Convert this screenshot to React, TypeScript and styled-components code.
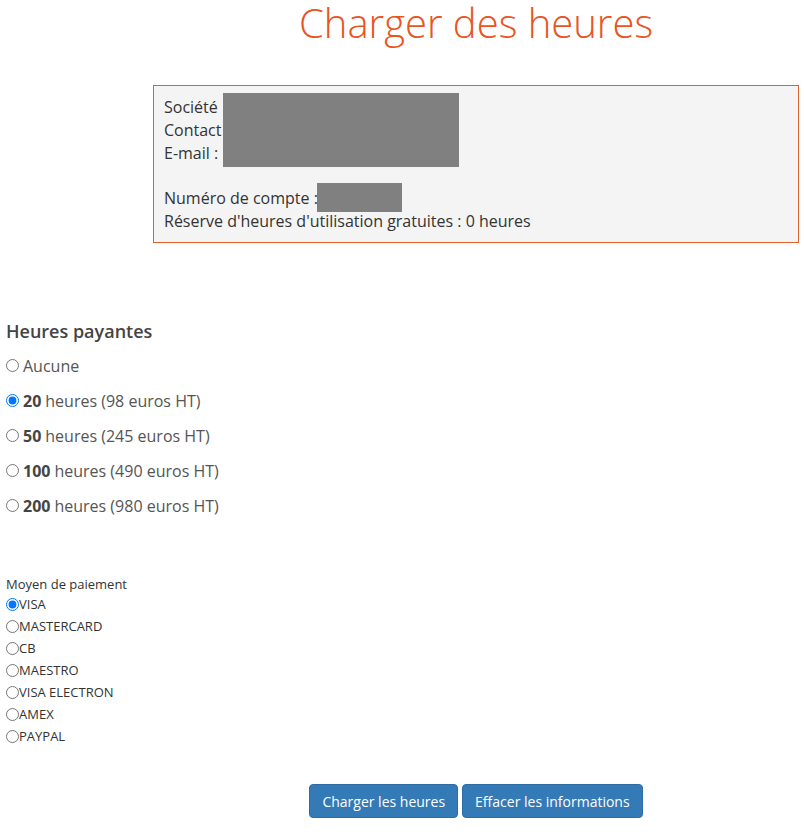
import { FC } from "react";
import styled, { createGlobalStyle } from "styled-components";

const GlobalStyle = createGlobalStyle`
body {
  margin: 0;
  background: #fff;
  font-family: "Open Sans", "Liberation Sans", sans-serif;
  color: #333;
}
`;

const Page = styled.div`
width: 804px;
padding: 0 5px 20px 6px;
box-sizing: border-box;
`;

const MainColumn = styled.div`
margin-left: 147px;
`;

const Title = styled.h1`
margin: 0;
padding-top: 3px;
font-size: 40px;
font-weight: 300;
line-height: 40px;
color: #e95420;
text-align: center;
`;

const InfoBox = styled.div`
margin-top: 42px;
border: 1px solid #e2602a;
background: #f4f4f4;
padding: 10px 10px 9px;
font-size: 16px;
line-height: 23px;
color: #333;
`;

const InfoLine = styled.div`
display: flex;
align-items: center;
height: 23px;
`;

const Spacer = styled.div`
height: 22px;
`;

const Masked = styled.span<{ $w: number; $h: number; $top: number; $left: number }>`
display: inline-block;
width: ${(p) => p.$w}px;
height: ${(p) => p.$h}px;
background: #808080;
align-self: flex-start;
margin-top: ${(p) => p.$top}px;
margin-left: ${(p) => p.$left}px;
`;

const SectionTitle = styled.h3`
margin: 76px 0 0;
font-size: 18px;
font-weight: 600;
line-height: 24px;
color: #444;
`;

const HoursList = styled.div`
margin-top: 11px;
display: flex;
flex-direction: column;
gap: 12px;
`;

const HoursRow = styled.label`
display: flex;
align-items: center;
height: 23px;
font-size: 16px;
color: #555;
`;

const Radio = styled.input.attrs({ type: "radio" })<{ $gap?: number }>`
width: 13px;
height: 13px;
margin: 0 ${(p) => p.$gap ?? 0}px 0 0;
`;

const Strong = styled.b`
font-weight: 700;
color: #444;
margin-right: 4px;
`;

const PayLabel = styled.div`
margin-top: 58px;
font-size: 13px;
line-height: 18px;
color: #333;
`;

const PayList = styled.div`
display: flex;
flex-direction: column;
`;

const PayRow = styled.label`
display: flex;
align-items: center;
height: 22px;
font-size: 13px;
color: #333;
`;

const Actions = styled.div`
margin-top: 37px;
display: flex;
justify-content: center;
gap: 4px;
`;

const Button = styled.button`
height: 34px;
padding: 0 12px;
background: #337ab7;
border: 1px solid #2e6da4;
border-radius: 4px;
color: #fff;
font-family: "Open Sans", "Liberation Sans", sans-serif;
font-size: 14px;
cursor: pointer;
`;

const hours = [
  { n: "20", price: "98" },
  { n: "50", price: "245" },
  { n: "100", price: "490" },
  { n: "200", price: "980" },
];

const payments = ["VISA", "MASTERCARD", "CB", "MAESTRO", "VISA ELECTRON", "AMEX", "PAYPAL"];

const App: FC = () => {
  return (
    <Page>
      <GlobalStyle />
      <MainColumn>
        <Title>Charger des heures</Title>
        <InfoBox>
          <InfoLine>
            Société<Masked $w={236} $h={74} $top={-3} $left={5} />
          </InfoLine>
          <InfoLine>Contact</InfoLine>
          <InfoLine>E-mail :</InfoLine>
          <Spacer />
          <InfoLine>
            Numéro de compte :<Masked $w={85} $h={29} $top={-4} $left={-1} />
          </InfoLine>
          <InfoLine>Réserve d'heures d'utilisation gratuites : 0 heures</InfoLine>
        </InfoBox>
      </MainColumn>

      <SectionTitle>Heures payantes</SectionTitle>
      <HoursList>
        <HoursRow>
          <Radio name="hours" $gap={4} />
          Aucune
        </HoursRow>
        {hours.map((h) => (
          <HoursRow key={h.n}>
            <Radio name="hours" $gap={4} defaultChecked={h.n === "20"} />
            <Strong>{h.n}</Strong>heures ({h.price} euros HT)
          </HoursRow>
        ))}
      </HoursList>

      <PayLabel>Moyen de paiement</PayLabel>
      <PayList>
        {payments.map((p) => (
          <PayRow key={p}>
            <Radio name="pay" defaultChecked={p === "VISA"} />
            {p}
          </PayRow>
        ))}
      </PayList>

      <MainColumn>
        <Actions>
          <Button>Charger les heures</Button>
          <Button>Effacer les informations</Button>
        </Actions>
      </MainColumn>
    </Page>
  );
};

export default App;
